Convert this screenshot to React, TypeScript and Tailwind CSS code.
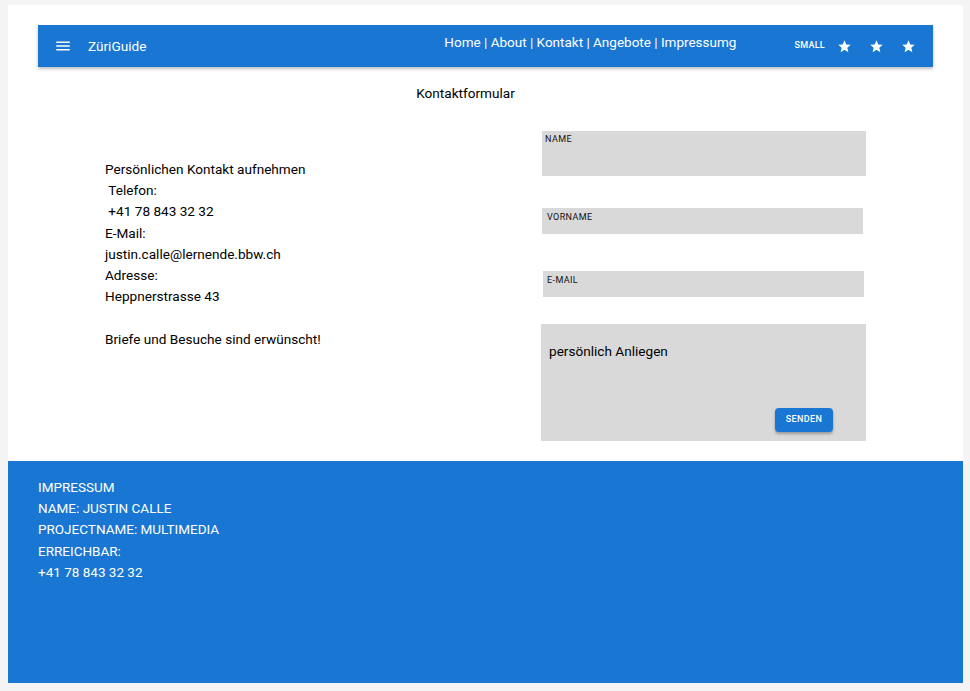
import { MdMenu, MdStar } from "react-icons/md";

const fields = [
  { label: "NAME", box: "w-[324px] h-[45px] mt-[29px] pl-[3px] pt-[3px]" },
  { label: "VORNAME", box: "w-[321px] h-[26px] mt-[32px] pl-[5px] pt-[4px]" },
  { label: "E-MAIL", box: "w-[321px] h-[26px] mt-[37px] ml-[1px] pl-[4px] pt-[4px]" },
];

export default function App() {
  return (
    <div
      className="min-h-screen bg-[#f4f4f4] pt-[5px] pb-[8px] pl-[8px] pr-[7px] text-black"
      style={{ fontFamily: "Roboto, 'Liberation Sans', sans-serif" }}
    >
      <div className="bg-white pt-[20px]">
        {/* Navbar */}
        <header className="mx-[30px] h-[42px] bg-[#1976d2] text-white flex items-center shadow-[0_2px_3px_rgba(0,0,0,0.25)]">
          <MdMenu className="ml-[16px] text-[18px]" />
          <span className="ml-[16px] text-[13.6px]">ZüriGuide</span>
          <nav className="ml-auto mr-[58px] -mt-[8px] text-[13.5px]">
            Home | About | Kontakt | Angebote | Impressumg
          </nav>
          <span className="text-[9px] font-medium tracking-[0.3px]">SMALL</span>
          <div className="flex items-center gap-[17px] ml-[12px] mr-[17px]">
            <MdStar className="text-[15px]" />
            <MdStar className="text-[15px]" />
            <MdStar className="text-[15px]" />
          </div>
        </header>

        <h1 className="text-center pr-[40px] text-[13.6px] mt-[18px] leading-[17px]">
          Kontaktformular
        </h1>

        <div className="flex">
          <div className="pl-[97px] pt-[57px] text-[13.6px] leading-[21.2px] w-[534px] shrink-0">
            <p>Persönlichen Kontakt aufnehmen</p>
            <p>&nbsp;Telefon:</p>
            <p>&nbsp;+41 78 843 32 32</p>
            <p>E-Mail:</p>
            <p>justin.calle@lernende.bbw.ch</p>
            <p>Adresse:</p>
            <p>Heppnerstrasse 43</p>
            <p>&nbsp;</p>
            <p>Briefe und Besuche sind erwünscht!</p>
          </div>

          <div className="flex flex-col">
            {fields.map(f => (
              <div
                key={f.label}
                className={`${f.box} bg-[#d9d9d9] text-[9px] tracking-[0.4px] leading-[11px] text-[#111]`}
              >
                {f.label}
              </div>
            ))}
            <div className="-ml-[1px] mt-[27px] mb-[20px] w-[325px] h-[117px] bg-[#d9d9d9] relative">
              <p className="pl-[8px] pt-[19px] text-[13.6px] leading-[17px]">persönlich Anliegen</p>
              <button className="absolute left-[234px] top-[84px] w-[58px] h-[24px] rounded-[4px] bg-[#1976d2] text-white text-[9px] font-medium tracking-[0.4px] shadow-[0_2px_3px_rgba(0,0,0,0.3)]">
                SENDEN
              </button>
            </div>
          </div>
        </div>

        {/* Footer */}
        <footer className="bg-[#1976d2] text-white h-[222px] pl-[30px] pt-[16px] text-[13.5px] leading-[21.2px]">
          <p>IMPRESSUM</p>
          <p>NAME: JUSTIN CALLE</p>
          <p>PROJECTNAME: MULTIMEDIA</p>
          <p>ERREICHBAR:</p>
          <p>+41 78 843 32 32</p>
        </footer>
      </div>
    </div>
  );
}
